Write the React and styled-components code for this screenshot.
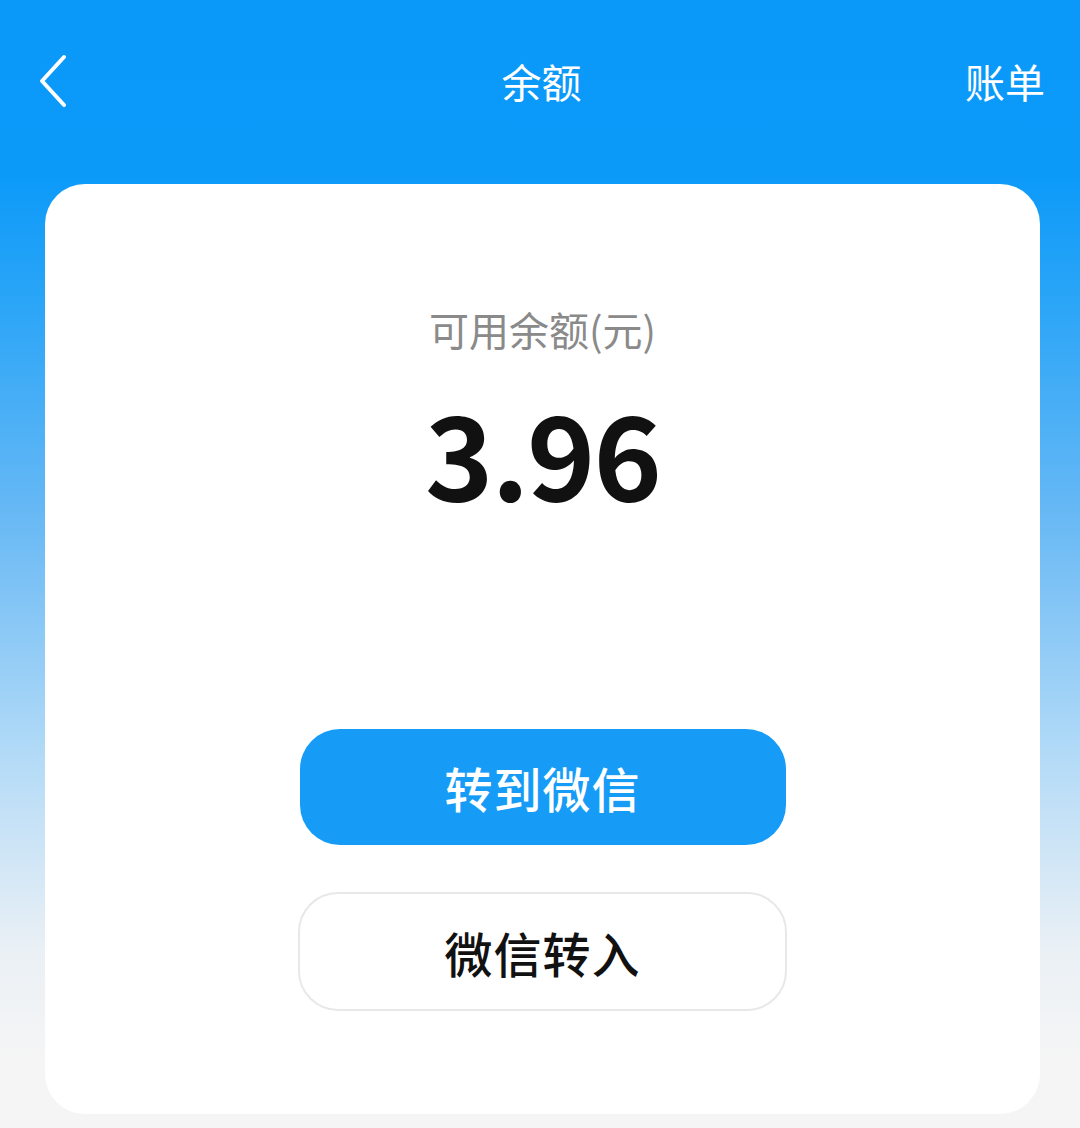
import React from 'react'
import styled, { createGlobalStyle } from 'styled-components'

const GlobalStyle = createGlobalStyle`
  html, body {
    margin: 0;
    padding: 0;
  }
  body {
    font-family: "Noto Sans CJK SC", "Noto Sans", sans-serif;
    background: #f5f5f5;
  }
`

const Page = styled.div`
  min-height: 1128px;
  background: linear-gradient(
    180deg,
    #0a99f9 0,
    #0c9af9 175px,
    #2aa5f7 300px,
    #66b8f5 510px,
    #b4dbf7 760px,
    #eaf0f5 950px,
    #f5f5f5 1060px
  );
  overflow: hidden;
`

const Header = styled.header`
  height: 162px;
  display: grid;
  grid-template-columns: 1fr auto 1fr;
  align-items: center;
  padding: 0 35px 0 38px;
  color: #fff;
`

const BackButton = styled.button`
  justify-self: start;
  width: 40px;
  height: 60px;
  padding: 0;
  border: none;
  background: transparent;
  display: flex;
  align-items: center;
  cursor: pointer;
`

const Title = styled.h1`
  margin: 0;
  font-size: 40px;
  font-weight: 400;
  line-height: 1;
`

const HeaderLink = styled.a`
  justify-self: end;
  font-size: 40px;
  font-weight: 400;
  line-height: 1;
  color: #fff;
  text-decoration: none;
`

const Card = styled.main`
  margin: 22px 40px 0 45px;
  height: 930px;
  background: #fff;
  border-radius: 40px;
  display: flex;
  flex-direction: column;
  align-items: center;
  padding-top: 125px;
  box-sizing: border-box;
`

const Label = styled.div`
  font-size: 40px;
  line-height: 1;
  color: #8a8a8a;
`

const Amount = styled.div`
  margin-top: 43px;
  font-size: 116px;
  font-weight: 700;
  line-height: 1;
  color: #111;
  letter-spacing: -2px;
`

const Actions = styled.div`
  margin-top: 221px;
  display: flex;
  flex-direction: column;
  align-items: center;
  gap: 47px;
`

const ActionButton = styled.button`
  width: ${p => (p.$primary ? '486px' : '489px')};
  height: ${p => (p.$primary ? '116px' : '119px')};
  border-radius: 40px;
  border: ${p => (p.$primary ? 'none' : '2px solid #e8e8e8')};
  background: ${p => (p.$primary ? '#169cf6' : '#fff')};
  color: ${p => (p.$primary ? '#fff' : '#111')};
  font-family: inherit;
  font-size: 48px;
  font-weight: 500;
  letter-spacing: 1px;
  cursor: pointer;
`

const App = () => {
  return (
    <>
      <GlobalStyle />
      <Page>
        <Header>
          <BackButton aria-label="返回">
            <svg width="30" height="54" viewBox="0 0 30 54">
              <path
                d="M26 3 L4 27 L26 51"
                fill="none"
                stroke="#fff"
                strokeWidth="4"
                strokeLinecap="round"
                strokeLinejoin="round"
              />
            </svg>
          </BackButton>
          <Title>余额</Title>
          <HeaderLink href="#">账单</HeaderLink>
        </Header>
        <Card>
          <Label>可用余额(元)</Label>
          <Amount>3.96</Amount>
          <Actions>
            <ActionButton $primary>转到微信</ActionButton>
            <ActionButton>微信转入</ActionButton>
          </Actions>
        </Card>
      </Page>
    </>
  )
}

export default App
